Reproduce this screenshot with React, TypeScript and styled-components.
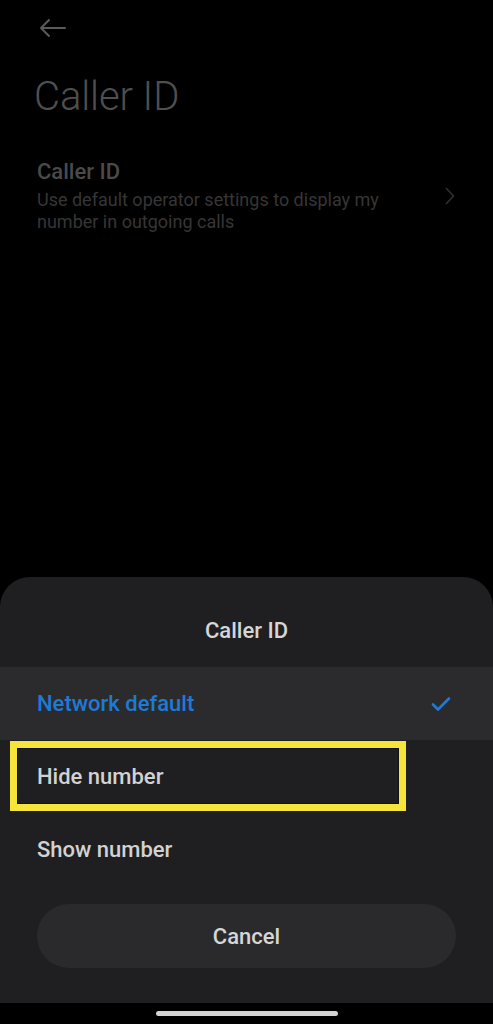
import React from "react";
import styled, { createGlobalStyle } from "styled-components";

const Global = createGlobalStyle`
  html, body { margin: 0; padding: 0; background: #000; }
  body { font-family: Roboto, "Noto Sans", "Liberation Sans", sans-serif; -webkit-font-smoothing: antialiased; }
  * { box-sizing: border-box; }
`;

const Screen = styled.div`
  width: 493px;
  height: 1024px;
  display: flex;
  flex-direction: column;
  background: #000;
  overflow: hidden;
`;

const Header = styled.header`
  flex: 1;
  display: flex;
  flex-direction: column;
  padding: 17px 0 0 0;
`;

const BackButton = styled.div`
  width: 30px;
  height: 22px;
  margin-left: 38px;
  display: flex;
  align-items: center;
`;

const PageTitle = styled.h1`
  margin: 34px 0 0 34px;
  font-size: 40px;
  font-weight: 300;
  color: #4f4f4f;
  line-height: 48px;
  letter-spacing: -0.1px;
`;

const SettingRow = styled.div`
  display: flex;
  align-items: center;
  padding: 0 38px 0 37px;
  margin-top: 37px;
`;

const SettingText = styled.div`
  flex: 1;
  display: flex;
  flex-direction: column;
`;

const SettingTitle = styled.div`
  font-size: 22px;
  font-weight: 500;
  color: #4a4a4a;
  line-height: 28px;
`;

const SettingSub = styled.div`
  font-size: 18px;
  color: #363636;
  line-height: 22px;
  margin-top: 3px;
  max-width: 380px;
`;

const Chevron = styled.div`
  display: flex;
`;

const Sheet = styled.section`
  background: #1f1f21;
  border-radius: 30px 30px 0 0;
  height: 426px;
  display: flex;
  flex-direction: column;
`;

const SheetTitle = styled.div`
  height: 90px;
  display: flex;
  align-items: center;
  justify-content: center;
  padding-top: 16px;
  font-size: 22px;
  font-weight: 500;
  color: #d6d6d6;
`;

const OptionList = styled.div`
  display: flex;
  flex-direction: column;
  position: relative;
`;

const Option = styled.div<{ $selected?: boolean }>`
  height: 73px;
  display: flex;
  align-items: center;
  justify-content: space-between;
  padding: 0 42px 0 37px;
  background: ${(p) => (p.$selected ? "#2b2b2d" : "transparent")};
  color: ${(p) => (p.$selected ? "#1f7ad6" : "#d2d2d2")};
  font-size: 22px;
  font-weight: 500;
`;

const Highlight = styled.div`
  position: absolute;
  left: 10px;
  top: 74px;
  width: 396px;
  height: 70px;
  border: 7px solid #f5e43a;
  box-shadow: inset 0 0 0 1px #121212;
  pointer-events: none;
`;

const CancelWrap = styled.div`
  padding: 18px 37px 0 37px;
`;

const CancelButton = styled.button`
  width: 100%;
  height: 64px;
  border: none;
  border-radius: 32px;
  background: #2a2a2c;
  color: #d6d6d6;
  font-family: inherit;
  font-size: 22px;
  font-weight: 500;
`;

const NavBar = styled.div`
  height: 21px;
  background: #000;
  display: flex;
  align-items: center;
  justify-content: center;
`;

const HomeIndicator = styled.div`
  width: 182px;
  height: 5px;
  border-radius: 3px;
  background: #d4d4d4;
`;

export default function App() {
  return (
    <Screen>
      <Global />
      <Header>
        <BackButton>
          <svg width="28" height="20" viewBox="0 0 28 20" fill="none">
            <path d="M27 10H3M11 2L3 10l8 8" stroke="#5a5a5a" strokeWidth="2" strokeLinecap="round" strokeLinejoin="round" />
          </svg>
        </BackButton>
        <PageTitle>Caller ID</PageTitle>
        <SettingRow>
          <SettingText>
            <SettingTitle>Caller ID</SettingTitle>
            <SettingSub>Use default operator settings to display my number in outgoing calls</SettingSub>
          </SettingText>
          <Chevron>
            <svg width="10" height="18" viewBox="0 0 10 18" fill="none">
              <path d="M1.5 1.5L8.5 9l-7 7.5" stroke="#303030" strokeWidth="1.6" strokeLinecap="round" strokeLinejoin="round" />
            </svg>
          </Chevron>
        </SettingRow>
      </Header>
      <Sheet>
        <SheetTitle>Caller ID</SheetTitle>
        <OptionList>
          <Option $selected>
            <span>Network default</span>
            <svg width="20" height="16" viewBox="0 0 20 16" fill="none">
              <path d="M2 8.5l5 5L18 2.5" stroke="#1f7ad6" strokeWidth="2.6" strokeLinecap="round" strokeLinejoin="round" />
            </svg>
          </Option>
          <Option>
            <span>Hide number</span>
          </Option>
          <Option>
            <span>Show number</span>
          </Option>
          <Highlight />
        </OptionList>
        <CancelWrap>
          <CancelButton>Cancel</CancelButton>
        </CancelWrap>
      </Sheet>
      <NavBar>
        <HomeIndicator />
      </NavBar>
    </Screen>
  );
}
